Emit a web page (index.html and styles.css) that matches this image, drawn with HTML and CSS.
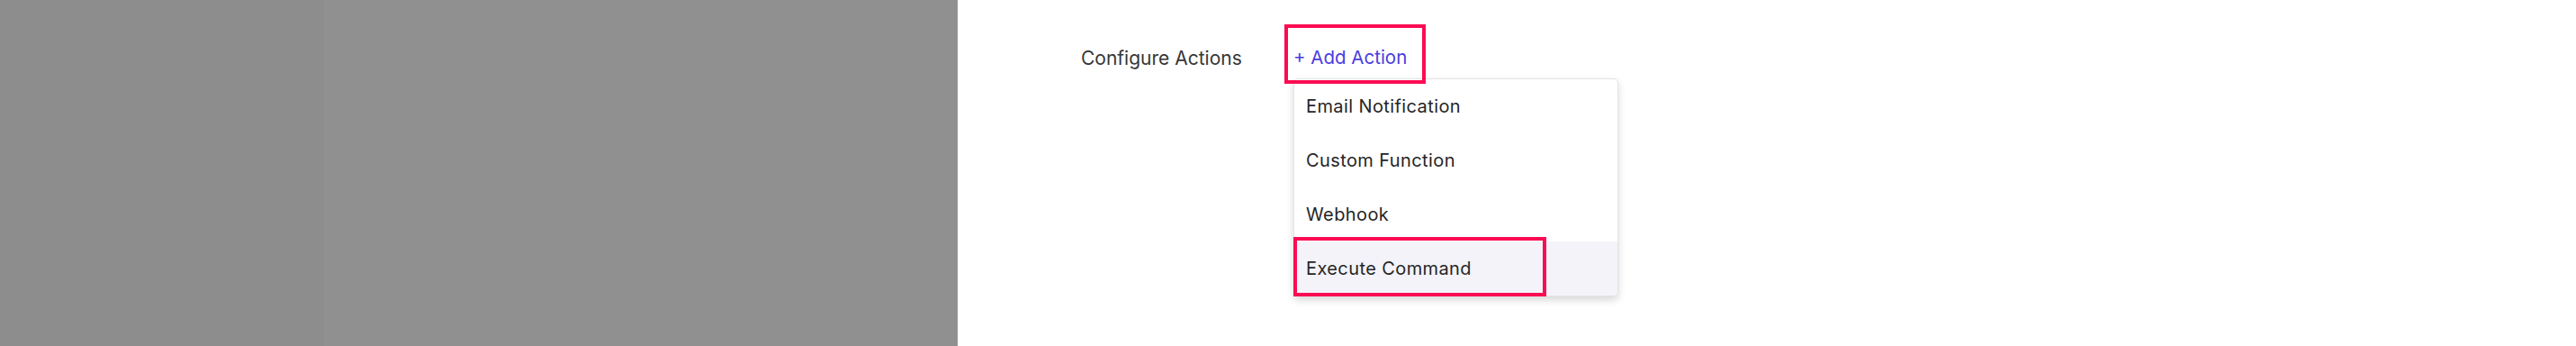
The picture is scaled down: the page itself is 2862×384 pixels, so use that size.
FILE: index.html
```html
<!DOCTYPE html>
<html lang="en">
<head>
<meta charset="utf-8">
<title>Configure Actions</title>
<link rel="stylesheet" href="styles.css">
</head>
<body>
<div class="page">
  <div class="backdrop">
    <div class="backdrop-a"></div>
    <div class="backdrop-b"></div>
  </div>
  <main class="content">
    <div class="field-row">
      <span class="field-label">Configure Actions</span>
      <div class="action-wrap">
        <button class="add-action" type="button">+ Add Action</button>
        <ul class="menu">
          <li class="menu-item">Email Notification</li>
          <li class="menu-item">Custom Function</li>
          <li class="menu-item">Webhook</li>
          <li class="menu-item is-active"><span class="mark"></span>Execute Command</li>
        </ul>
      </div>
    </div>
  </main>
</div>
</body>
</html>
```
FILE: styles.css
```css
* { box-sizing: border-box; }
html, body { margin: 0; padding: 0; background: #ffffff; }
body {
  font-family: Inter, "Noto Sans", "Liberation Sans", sans-serif;
  width: 2862px;
  height: 384px;
  overflow: hidden;
}
.page {
  display: flex;
  height: 384px;
}
.backdrop {
  display: flex;
  width: 1064px;
  flex: none;
  height: 100%;
}
.backdrop-a { width: 360px; background: #8d8d8d; }
.backdrop-b { flex: 1; background: #909090; }

.content {
  flex: 1;
  padding: 27px 0 0 137px;
}
.field-row {
  display: flex;
  align-items: flex-start;
}
.field-label {
  width: 226px;
  flex: none;
  margin-top: 22.5px;
  font-size: 21px;
  line-height: 30px;
  color: #363636;
}
.action-wrap {
  display: flex;
  flex-direction: column;
  align-items: flex-start;
}
.add-action {
  position: relative;
  z-index: 2;
  font-family: inherit;
  font-size: 20.5px;
  line-height: 30px;
  color: #4b3ddf;
  background: transparent;
  border: 4px solid #fb0c52;
  padding: 18px 17px 10px 6px;
  margin: 0;
  cursor: pointer;
}
.menu {
  list-style: none;
  margin: -6px 0 0 10px;
  padding: 0;
  width: 361px;
  background: #ffffff;
  border: 1px solid #e4e4e4;
  border-radius: 5px;
  box-shadow: 0 4px 8px rgba(0, 0, 0, 0.16);
  overflow: visible;
}
.menu-item {
  position: relative;
  height: 60px;
  line-height: 60px;
  padding-left: 13px;
  font-size: 20px;
  letter-spacing: 0.4px;
  color: #262626;
}
.menu-item.is-active {
  background: #f3f3f9;
  border-radius: 0 0 4px 4px;
}
.mark {
  position: absolute;
  left: -1px;
  top: -5px;
  bottom: -1px;
  width: 281px;
  border: 4px solid #fb0c52;
}
```
